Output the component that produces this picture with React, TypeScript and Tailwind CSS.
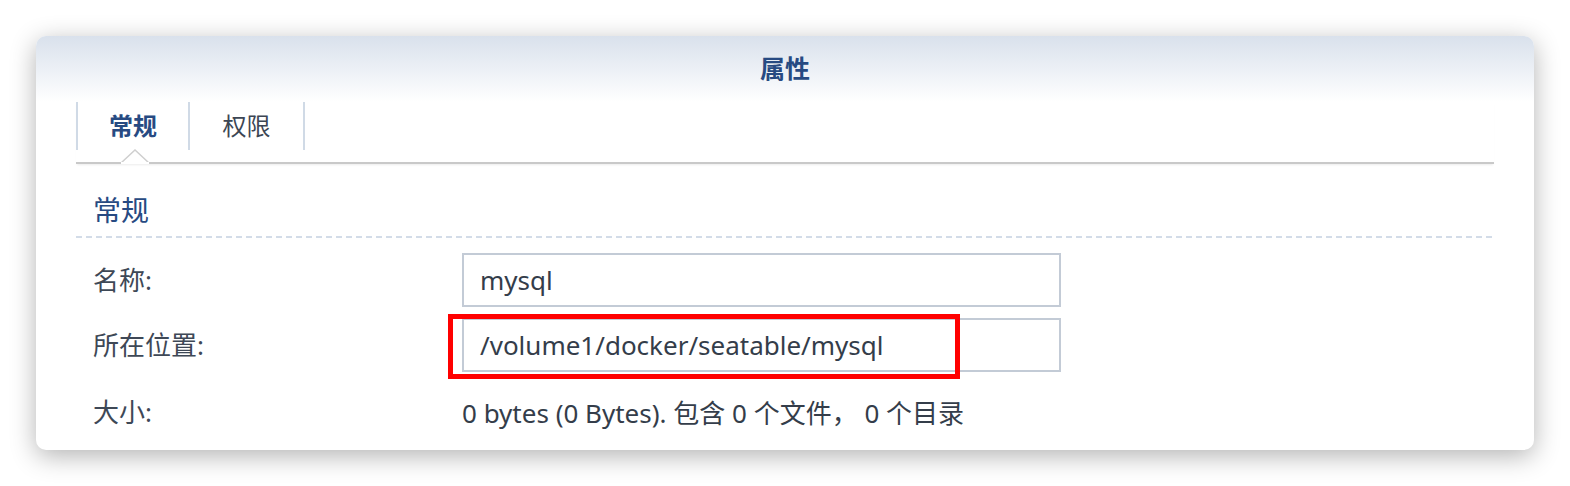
import React from 'react';

const FONT = '"Noto Sans", "Noto Sans CJK SC", sans-serif';

function Row({ label, children }: { label: string; children: React.ReactNode }) {
  return (
    <div className="flex items-center">
      <div className="w-[386px] pl-[17px] text-[26px] text-[#3e4856]">{label}</div>
      <div className="flex-1">{children}</div>
    </div>
  );
}

export default function App() {
  return (
    <div className="w-[1570px] h-[486px] bg-white p-[36px]" style={{ fontFamily: FONT }}>
      <div className="w-[1498px] h-[414px] rounded-[10px] bg-white shadow-[0_6px_26px_rgba(0,0,0,0.3)] overflow-hidden flex flex-col">
        {/* header */}
        <div className="h-[66px] bg-gradient-to-b from-[#d9e1ec] to-white flex items-center justify-center">
          <span className="text-[25px] font-bold text-[#274a82]">属性</span>
        </div>

        <div className="px-[40px] flex flex-col">
          {/* tabs */}
          <div className="relative pb-[12px] border-b-2 border-[#c9c9c9] shadow-[0_2px_2px_-1px_rgba(0,0,0,0.08)]">
            <div className="flex h-[48px]">
              <div className="w-[114px] border-l-2 border-r-2 border-[#d0dae6] flex items-center justify-center text-[24px] font-bold text-[#274a82]">
                常规
              </div>
              <div className="w-[115px] border-r-2 border-[#d0dae6] flex items-center justify-center text-[24px] text-[#3c4654]">
                权限
              </div>
            </div>
            <svg className="absolute left-[45px] bottom-[-2px]" width="28" height="15" viewBox="0 0 28 15">
              <path d="M0 14 L14 1 L28 14 Z" fill="#ffffff" />
              <path d="M0 14 L14 1 L28 14" fill="none" stroke="#cfcfcf" strokeWidth="1.5" />
              <rect x="0" y="13" width="28" height="2" fill="#ffffff" />
            </svg>
          </div>

          {/* section heading */}
          <div className="mt-[26px] h-[40px] flex items-center pl-[17px] text-[28px] text-[#274a82]">常规</div>
          <div className="mt-[6px] h-[2px] bg-[repeating-linear-gradient(to_right,#d3dce8_0_6px,transparent_6px_10px)]" />

          {/* fields */}
          <div className="mt-[15px] flex flex-col gap-[11px]">
            <Row label="名称:">
              <div className="w-[599px] h-[54px] border-2 border-[#c3cbd6] flex items-center pl-[16px] text-[26px] text-[#343d4a]">
                mysql
              </div>
            </Row>
            <Row label="所在位置:">
              <div className="relative w-[599px] h-[54px] border-2 border-[#c3cbd6] flex items-center pl-[16px] text-[26px] text-[#343d4a]">
                /volume1/docker/seatable/mysql
                <div className="absolute left-[-16px] top-[-6px] w-[512px] h-[65px] border-[5px] border-[#ff0000]" />
              </div>
            </Row>
          </div>
          <div className="mt-[21px]">
            <Row label="大小:">
              <div className="text-[26px] text-[#343d4a] leading-[30px]">
                0 bytes (0 Bytes). 包含 0 个文件， 0 个目录
              </div>
            </Row>
          </div>
        </div>
      </div>
    </div>
  );
}
